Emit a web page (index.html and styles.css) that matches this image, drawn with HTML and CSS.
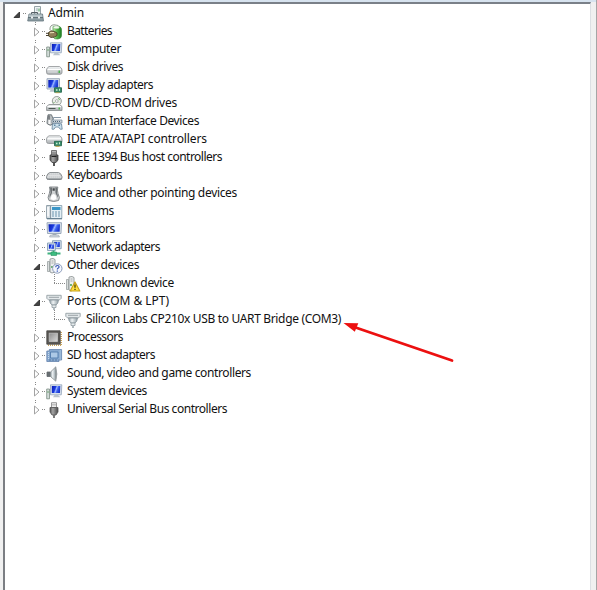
FILE: index.html
```html
<!DOCTYPE html>
<html lang="en">
<head>
<meta charset="utf-8">
<title>Device Manager</title>
<link rel="stylesheet" href="styles.css">
</head>
<body>
<svg class="defs" width="0" height="0" aria-hidden="true">
  <defs>
    <linearGradient id="steel" x1="0" y1="0" x2="0" y2="1"><stop offset="0" stop-color="#f4f6f7"/><stop offset="1" stop-color="#a8adb0"/></linearGradient>
    <linearGradient id="screen" x1="0" y1="0" x2="1" y2="0.3"><stop offset="0" stop-color="#0a1bb0"/><stop offset=".45" stop-color="#1a3be0"/><stop offset=".6" stop-color="#9db8ff"/><stop offset=".75" stop-color="#3e63f0"/><stop offset="1" stop-color="#1c38d0"/></linearGradient>
    <linearGradient id="green" x1="0" y1="0" x2="1" y2="0"><stop offset="0" stop-color="#c5efae"/><stop offset=".45" stop-color="#52b548"/><stop offset="1" stop-color="#1d7a22"/></linearGradient>
    <linearGradient id="dark" x1="0" y1="0" x2="1" y2="0"><stop offset="0" stop-color="#555"/><stop offset=".35" stop-color="#a5a5a5"/><stop offset="1" stop-color="#4a4a4a"/></linearGradient>
    <linearGradient id="cone" x1="0" y1="0" x2="1" y2="0"><stop offset="0" stop-color="#8f9da3"/><stop offset=".4" stop-color="#eef2f4"/><stop offset="1" stop-color="#8f9da3"/></linearGradient>
    <linearGradient id="die" x1="0" y1="0" x2="1" y2="1"><stop offset="0" stop-color="#8d8d8d"/><stop offset="1" stop-color="#dadada"/></linearGradient>
    <symbol id="closed" viewBox="0 0 8 10"><path d="M1.500 1v8L6 5z" fill="#fff" stroke="#a3a3a3"/></symbol>
    <symbol id="open" viewBox="0 0 8 8"><path d="M6.500 1v5.500H1z" fill="#444" stroke="#222" stroke-width=".8"/></symbol>
    <symbol id="chip" viewBox="0 0 8 6"><path d="M.5.500h7v4.500h-7z" fill="#3a8d6c" stroke="#1d6144" stroke-width=".8"/><path d="M2 2h1.500v1.500H2zM5 1.500h1v2H5z" fill="#c9ecd0"/><path d="M1.500 5.600h4" stroke="#c0a648"/></symbol>
    <symbol id="root" viewBox="0 0 17 16"><path d="M7.500.5h6v8h-6z" fill="#eef3f4" stroke="#95a2a6"/><path d="M9 2h2v3H9z" fill="#c3d0d4"/><path d="M12 2.500v3" stroke="#4b9b55"/><path d="M4.500 8V6.500h6V8" fill="none" stroke="#555e64"/><path d="M2 8h13.500l1 7H.7z" fill="#8c9ca2" stroke="#66767d" stroke-width=".8"/><path d="M2 8.500h13l.5 2.500h-14z" fill="#b6c3c7"/><path d="M1 11.500h15" stroke="#5b6a70" stroke-width=".8"/><path d="M4 10.500h2v2H4zM11 10.500h2v2h-2z" fill="#eceff0"/></symbol>
    <symbol id="battery" viewBox="0 0 17 16"><path d="M4 6Q3.500 1 8 .8q5-.3 6.500 3.200" fill="none" stroke="#7f8b80" stroke-width=".9"/><path d="M7 2.500h6.500q2 1 2 3v6q0 3-3.500 3.500-4 .5-5-2z" fill="url(#green)" stroke="#3a8d3b" stroke-width=".7"/><ellipse cx="10.300" cy="3.300" rx="3" ry="1.500" fill="#f0faea" stroke="#8bbb86" stroke-width=".5"/><path d="M0 9.300h3M0 11.500h3" stroke="#4a4030"/><path d="M2.500 8.500L5 6.800l3.500.7L11 9v2.500L8.500 13 5 13.500 2.500 12z" fill="#8f7f57" stroke="#40371f" stroke-width=".8"/><path d="M4 8.800l4-.3" stroke="#efe6bd"/></symbol>
    <symbol id="monitor" viewBox="0 0 17 16"><path d="M1 .7h14.500l-.5 10.800H1.500z" fill="#dbe3eb" stroke="#94a3b6" stroke-width=".9"/><path d="M2.500 2.200h11.500l-.3 7.500H2.800z" fill="url(#screen)"/><path d="M6.500 11.500h4v2h-4z" fill="#a5afbc"/><path d="M4.500 13h8l1 2h-10z" fill="#d5dbe1" stroke="#96a0aa" stroke-width=".6"/></symbol>
    <symbol id="computer" viewBox="0 0 17 16"><path d="M.7 5h2.800v9.800H.7z" fill="#d3dcd9" stroke="#7b8c83" stroke-width=".8"/><path d="M1.300 8h1.500" stroke="#4f9251"/><path d="M4.500.8h11.300l-.5 10H4.500z" fill="#dbe3ec" stroke="#94a5ba" stroke-width=".8"/><path d="M5.800 2h8.500l-.3 7H5.800z" fill="url(#screen)"/><path d="M8.500 11h3.500l2.500 2.300H7z" fill="#bac3cd"/></symbol>
    <symbol id="disk" viewBox="0 0 17 16"><path d="M3 6.500h10.500q2.500 1.500 2.500 3.500v2.500q0 1.800-2 1.800H2.500Q.5 14.300.5 12.500V10Q.5 8 3 6.500z" fill="url(#steel)" stroke="#8f9395" stroke-width=".8"/><path d="M1.500 9.500h13.500" stroke="#fff" stroke-width="1.300"/><path d="M2 12h9" stroke="#dcdedf"/><path d="M12.500 10.500h1.500v2.500h-1.500z" fill="#4cb54f"/></symbol>
    <symbol id="display" viewBox="0 0 17 16"><path d="M1 .7h12.500V11H1z" fill="#dbe3eb" stroke="#94a3b6" stroke-width=".9"/><path d="M2.300 2h9.900v7.600H2.300z" fill="url(#screen)"/><path d="M5 11.200h4l1 2.500H3.500z" fill="#bac3cd"/><use href="#chip" x="8" y="9" width="8" height="6.500"/></symbol>
    <symbol id="dvd" viewBox="0 0 17 16"><circle cx="10.800" cy="5" r="4.500" fill="#eceeea" stroke="#8b938d" stroke-width=".9"/><circle cx="10.800" cy="5" r="1.400" fill="#fff" stroke="#9aa29d" stroke-width=".8"/><path d="M12.500 2l1 2M8.500 7l-1-1" stroke="#6aaf63"/><path d="M3 8.500h10.500L16 10.500v4H.6v-4z" fill="url(#steel)" stroke="#858a8c" stroke-width=".8"/><path d="M1.500 10.500H15" stroke="#fff"/><path d="M2.500 12.500h7" stroke="#4e5853"/><path d="M12.500 11.500h1.500V13.500h-1.500z" fill="#4cb54f"/></symbol>
    <symbol id="hid" viewBox="0 0 17 16"><path d="M2 .8h3.500L7 4.500V10q-2.500 2.500-5.500 0L1 9l.5-5z" fill="#b9bdbf" stroke="#686f74" stroke-width=".9"/><path d="M3 1.500v4" stroke="#44494c"/><path d="M3.500 6v4" stroke="#f7f7f7" stroke-width="2"/><path d="M7.500 5.500V3.500h7.500" fill="none" stroke="#8797a5"/><path d="M6 6h10v3H6z" fill="#ccd5dc" stroke="#758897" stroke-width=".7"/><path d="M7 7.500h8" stroke="#52697a" stroke-dasharray="1 1"/><path d="M6.500 10q4.500-1.500 9 0l.7 5.200h-2L12.500 13h-3L8 15.200H6z" fill="#cde1ec" stroke="#64829a" stroke-width=".8"/><path d="M8 11.200h1.500M12.500 11.200H14" stroke="#315f85"/></symbol>
    <symbol id="ide" viewBox="0 0 17 16"><path d="M3 3.800h10.500Q16 5 16 7v2.500q0 2-2 2H2.500q-2 0-2-2V7Q.5 5 3 3.800z" fill="url(#steel)" stroke="#8f9395" stroke-width=".8"/><path d="M1.500 6.800H15" stroke="#fff" stroke-width="1.300"/><use href="#chip" x="8" y="8.500" width="8" height="6.500"/></symbol>
    <symbol id="firewire" viewBox="0 0 17 16"><path d="M5.500.5h5v4.500h-5z" fill="#e0e0e0" stroke="#666" stroke-width=".9"/><path d="M7 1.500v2.500M9 1.500v2.500" stroke="#444"/><path d="M4 5h8v5l-2 2.500H6L4 10z" fill="url(#dark)" stroke="#3d3d3d" stroke-width=".8"/><path d="M5.500 6.500h5" stroke="#222"/><path d="M8 12.500V16" stroke="#444" stroke-width="1.800"/></symbol>
    <symbol id="keyboard" viewBox="0 0 17 16"><path d="M4 4.500h8.500q2.500.5 3.500 4v1.500q-.3 1.500-2 1.500H2.500q-1.700 0-2-1.500V8.500Q1.500 5 4 4.500z" fill="#c6cacc" stroke="#85898c" stroke-width=".9"/><path d="M3.500 5.900h9.500M2.300 7.500h12M1.500 9h13.500" stroke="#f4f4f4" stroke-width=".8" stroke-dasharray="1.400 .6"/><path d="M1 11h15" stroke="#777c80" stroke-width=".8"/></symbol>
    <symbol id="mouse" viewBox="0 0 17 16"><path d="M3.500 1h8.300Q11 4 12 7.500q2.500 4.500.5 7-4.700 2-9.500 0-2-2.500.3-7Q4.500 4 3.500 1z" fill="#cfd2d3" stroke="#7b8083" stroke-width=".9"/><path d="M4 1.500h2L6 7l-2.500 5q-.3-3 1-5zM11.300 1.500h-2l.2 5.500 2.500 5q.3-3-1-5z" fill="#6b7073"/><path d="M5.500 9.500q2-3 4.200 0l.8 3.500q-3 2-6 0z" fill="#fff"/><path d="M6.500 3.500h2.300" stroke="#44494c" stroke-width="2.500"/></symbol>
    <symbol id="modem" viewBox="0 0 17 16"><path d="M4.500 1.500h11.300v13H4.500z" fill="#e4eff5" stroke="#7f98a8" stroke-width=".8"/><path d="M.6 1.500h4v13h-4z" fill="#d3dbe0" stroke="#7a8c97" stroke-width=".8"/><path d="M2 3v9.500" stroke="#fff" stroke-width="1.500"/><path d="M6 3h8.500v3H6z" fill="#3a96c8"/><path d="M6 8h8.500M6 10h8.500M6 12h8.500" stroke="#6b94ad" stroke-dasharray="2 1"/><path d="M1 14.800h15" stroke="#557285"/></symbol>
    <symbol id="network" viewBox="0 0 17 16"><path d="M6.500.7h8.700v8H6.500z" fill="#d5e0ea" stroke="#859db6" stroke-width=".9"/><path d="M8 2h5.800v5H8z" fill="url(#screen)"/><path d="M1.500 3h7.800v7.500H1.500z" fill="#dde6ee" stroke="#859db6" stroke-width=".9"/><path d="M2.900 4.400h5V8.800h-5z" fill="url(#screen)"/><path d="M7.500 10.500v3M1.500 13.500h13" stroke="#3fb27f" stroke-width="2"/><path d="M5 12h5.500v3.500H5z" fill="#3dbd80" stroke="#2b9163" stroke-width=".6"/></symbol>
    <symbol id="case" viewBox="0 0 17 16"><path d="M1.500 3.500h2v10h-2z" fill="#d8dcdc" stroke="#9ba1a2" stroke-width=".8"/><path d="M4 1l3-.5 2 1V14l-3 1-2-1z" fill="#eceeee" stroke="#8e9596" stroke-width=".9"/><path d="M5.500 3h2M5.500 5h2" stroke="#999" stroke-width=".8"/><path d="M6 8v2" stroke="#49a24c" stroke-width="1.500"/></symbol>
    <symbol id="other" viewBox="0 0 17 16"><use href="#case" width="17" height="16"/><circle cx="11.300" cy="10.500" r="4.700" fill="#f4f7fd" stroke="#8c9cba"/><path d="M9.700 9.200q0-1.700 1.700-1.700T13 9q0 .8-1 1.300-.7.400-.7 1.200M11.300 12.500v1.200" fill="none" stroke="#3a57b5" stroke-width="1.200"/></symbol>
    <symbol id="unknown" viewBox="0 0 17 16"><use href="#case" width="17" height="16"/><path d="M10 6L14.800 15H5.200z" fill="#ffe040" stroke="#c9a11a" stroke-width="1.200" stroke-linejoin="round"/><path d="M10 8.500v3.300M10 12.700v1.200" stroke="#4b4000" stroke-width="1.300"/></symbol>
    <symbol id="port" viewBox="0 0 17 16"><path d="M.8 1.300h14.400v3l-1.500 1.500H2.300L.8 4.300z" fill="#e3e8ea" stroke="#8d979c" stroke-width=".8"/><path d="M3.500 3.300h9.500" stroke="#717b80" stroke-width="1.200" stroke-dasharray="1 1"/><path d="M3.500 6h9l-.7 3-1.800 2H6L4.200 9z" fill="url(#cone)" stroke="#87939a" stroke-width=".8"/><path d="M6 11h4v2.500H6z" fill="#e6ebed" stroke="#8d999f" stroke-width=".8"/><path d="M8 13.500V16" stroke="#b0babf" stroke-width="2"/></symbol>
    <symbol id="cpu" viewBox="0 0 17 16"><path d="M2 15.200h13M15.200 2v13" stroke="#c9a459" stroke-width="1.600" stroke-dasharray="1 1"/><path d="M.8.800h13.400v13.400H.8z" fill="#5a5855" stroke="#45423f" stroke-width=".8"/><path d="M3.200 3.200h8.300v8.300H3.200z" fill="url(#die)" stroke="#d5d5d5" stroke-width=".6"/></symbol>
    <symbol id="sd" viewBox="0 0 17 16"><path d="M.8 3h2.500V1.500h12.300V12H13v1.500H.8z" fill="#86a8cf" stroke="#6484ad" stroke-width=".8"/><path d="M4.500 4h7.500v6H4.500z" fill="#adc9e6" stroke="#507bab" stroke-width=".9"/><path d="M2.500 4v8M14.200 2.500v9" stroke="#c9dbec" stroke-dasharray="1 1"/><path d="M3 12h9.500" stroke="#5878a0" stroke-dasharray="2 1"/></symbol>
    <symbol id="sound" viewBox="0 0 17 16"><path d="M1 6h3.500v4.500H1z" fill="#666d71" stroke="#62676b" stroke-width=".8"/><path d="M4.500 6L9.800.8v14.400l-5.300-4.700z" fill="url(#cone)" stroke="#888e91" stroke-width=".8"/><path d="M9.500 1Q12.300 8 9.500 15" fill="#899196" stroke="#999fa2" stroke-width=".8"/></symbol>
    <symbol id="usb" viewBox="0 0 17 16"><path d="M5.500.7h5V5.500h-5z" fill="#ededed" stroke="#8d8d8d" stroke-width=".9"/><path d="M7 2v1.500M9 2v1.500" stroke="#999"/><path d="M4 5.500h8V10l-2 3H6l-2-3z" fill="url(#dark)" stroke="#555" stroke-width=".8"/><path d="M8 13v3" stroke="#666" stroke-width="1.700"/></symbol>
  </defs>
</svg>
<main class="window">
  <div class="pane"><ul class="tree" id="tree"></ul></div>
  <svg class="arrow" viewBox="0 0 116 44" aria-hidden="true"><path d="M15 8L110 40.500" stroke="#ec1010" stroke-width="2.800" stroke-linecap="round"/><path d="M1.500 3L16.300 3.300 12.800 11.800z" fill="#ec1010"/></svg>
</main>
<script src="tree.js"></script>
</body>
</html>
```
FILE: tree.js
```js
// level, icon, label, label width, state
const devices = [
  [0, "root", "Admin", 36, "open"],
  [1, "battery", "Batteries", 45, "closed"],
  [1, "computer", "Computer", 54, "closed"],
  [1, "disk", "Disk drives", 56, "closed"],
  [1, "display", "Display adapters", 86, "closed"],
  [1, "dvd", "DVD/CD-ROM drives", 110, "closed"],
  [1, "hid", "Human Interface Devices", 132, "closed"],
  [1, "ide", "IDE ATA/ATAPI controllers", 140, "closed"],
  [1, "firewire", "IEEE 1394 Bus host controllers", 155, "closed"],
  [1, "keyboard", "Keyboards", 55, "closed"],
  [1, "mouse", "Mice and other pointing devices", 170, "closed"],
  [1, "modem", "Modems", 47, "closed"],
  [1, "monitor", "Monitors", 48, "closed"],
  [1, "network", "Network adapters", 93, "closed"],
  [1, "other", "Other devices", 72, "open"],
  [2, "unknown", "Unknown device", 88, ""],
  [1, "port", "Ports (COM & LPT)", 102, "open"],
  [2, "port", "Silicon Labs CP210x USB to UART Bridge (COM3)", 255, ""],
  [1, "cpu", "Processors", 56, "closed"],
  [1, "sd", "SD host adapters", 88, "closed"],
  [1, "sound", "Sound, video and game controllers", 184, "closed"],
  [1, "computer", "System devices", 80, "closed"],
  [1, "usb", "Universal Serial Bus controllers", 160, "closed"]
];
const tree = document.getElementById("tree");
devices.forEach(([level, icon, text, width, state], i) => {
  const row = document.createElement("li");
  row.className = `row level-${level}` + (i === devices.length - 1 ? " last" : "");
  row.innerHTML =
    `<span class="toggle ${state}">${state ? `<svg><use href="#${state}"/></svg>` : ""}</span>` +
    `<i class="link"></i><svg class="icon"><use href="#${icon}"/></svg><span class="label"></span>`;
  const label = row.querySelector(".label");
  label.textContent = text;
  tree.append(row);
  const natural = label.getBoundingClientRect().width;
  label.style.letterSpacing = (width - natural) / text.length + "px";
});
```
FILE: styles.css
```css
* { box-sizing: border-box; }
body { margin: 0; background: #f0f0f0; }
.defs { position: absolute; }
.window {
  position: relative;
  height: 590px;
  padding: 2px 5px 0 3px;
  overflow: hidden;
  border-right: 1px solid #a5a5a5;
  background: linear-gradient(#d7e3ef 0 2px, #f0f0f0 2px);
}
.pane {
  height: 588px;
  background: #fff;
  border-top: 2px solid #7a8088;
  border-left: 2px solid #7b7e83;
  border-right: 1px solid #dcdfe3;
}
.tree { margin: 0; padding: 0; list-style: none; }
.row {
  display: flex;
  align-items: center;
  height: 18px;
  font: 12px/18px "Noto Sans", "Open Sans", sans-serif;
  color: #111;
  white-space: nowrap;
}
.level-0 { padding-left: 8px; }
.level-1 { padding-left: 28px; }
.level-2 { padding-left: 49px; }
.level-1, .level-2 {
  background: repeating-linear-gradient(#888 0 1px, transparent 1px 2px) 30px 0 / 1px 18px no-repeat;
}
.level-2 {
  background:
    repeating-linear-gradient(#888 0 1px, transparent 1px 2px) 30px 0 / 1px 18px no-repeat,
    repeating-linear-gradient(#888 0 1px, transparent 1px 2px) 49px 0 / 1px 10px no-repeat;
}
.level-1.last { background-size: 1px 9px; }
.toggle { display: flex; align-items: center; width: 9px; height: 14px; margin-top: 1px; background: #fff; }
.toggle svg { width: 8px; height: 10px; margin-top: 1px; }
.level-0 .toggle { width: 10px; }
.level-2 .toggle { display: none; }
.toggle.open svg { height: 8px; margin-top: 2px; }
.link {
  width: 4px;
  height: 1px;
  margin-top: 1px;
  background: repeating-linear-gradient(90deg, #888 0 1px, transparent 1px 2px);
}
.level-2 .link { width: 11px; }
.icon { flex: none; width: 17px; height: 16px; margin-top: 1px; }
.label { margin-left: 4px; }
.arrow { position: absolute; left: 342px; top: 320px; width: 116px; height: 44px; fill: none; }
```
